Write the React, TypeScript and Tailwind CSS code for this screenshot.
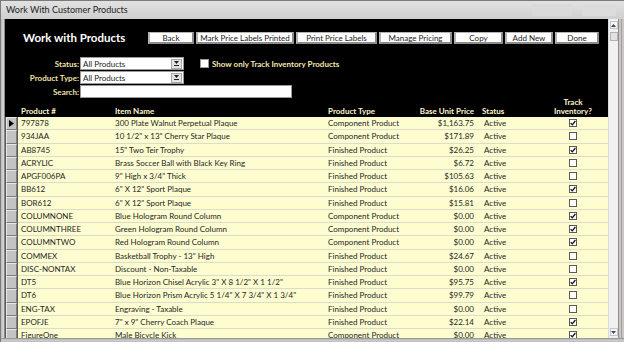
import React from "react";

type Row = {
  code: string;
  name: string;
  type: string;
  price: string;
  track: boolean;
};

const rows: Row[] = [
  { code: "797878", name: "300 Plate Walnut Perpetual Plaque", type: "Component Product", price: "$1,163.75", track: true },
  { code: "934JAA", name: '10 1/2" x 13" Cherry Star Plaque', type: "Component Product", price: "$171.89", track: false },
  { code: "AB8745", name: '15" Two Teir Trophy', type: "Finished Product", price: "$26.25", track: true },
  { code: "ACRYLIC", name: "Brass Soccer Ball with Black Key Ring", type: "Finished Product", price: "$6.72", track: false },
  { code: "APGF006PA", name: '9" High x 3/4" Thick', type: "Finished Product", price: "$105.63", track: false },
  { code: "BB612", name: '6" X 12" Sport Plaque', type: "Finished Product", price: "$16.06", track: true },
  { code: "BOR612", name: '6" X 12" Sport Plaque', type: "Finished Product", price: "$15.81", track: false },
  { code: "COLUMNONE", name: "Blue Hologram Round Column", type: "Component Product", price: "$0.00", track: true },
  { code: "COLUMNTHREE", name: "Green Hologram Round Column", type: "Component Product", price: "$0.00", track: true },
  { code: "COLUMNTWO", name: "Red Hologram Round Column", type: "Component Product", price: "$0.00", track: true },
  { code: "COMMEX", name: 'Basketball Trophy - 13" High', type: "Finished Product", price: "$24.67", track: false },
  { code: "DISC-NONTAX", name: "Discount - Non-Taxable", type: "Finished Product", price: "$0.00", track: false },
  { code: "DT5", name: 'Blue Horizon Chisel Acrylic 3" X 8 1/2" X 1 1/2"', type: "Finished Product", price: "$95.75", track: true },
  { code: "DT6", name: 'Blue Horizon Prism Acrylic 5 1/4" X 7 3/4" X 1 3/4"', type: "Finished Product", price: "$99.79", track: false },
  { code: "ENG-TAX", name: "Engraving  - Taxable", type: "Finished Product", price: "$0.00", track: false },
  { code: "EPOFJE", name: '7" x 9" Cherry Coach Plaque', type: "Finished Product", price: "$22.14", track: true },
  { code: "FigureOne", name: "Male Bicycle Kick", type: "Component Product", price: "$0.00", track: true },
];

const buttons = [
  { label: "Back", w: "w-[46px]" },
  { label: "Mark Price Labels Printed", w: "w-[98px]" },
  { label: "Print Price Labels", w: "w-[81px]" },
  { label: "Manage Pricing", w: "w-[73px]" },
  { label: "Copy", w: "w-[49px]" },
  { label: "Add New", w: "w-[48px]" },
  { label: "Done", w: "w-[44px]" },
];

function CheckBox({ checked }: { checked: boolean }) {
  return (
    <div className="w-[8px] h-[8px] bg-white border border-[#5a5a5a] flex items-center justify-center">
      {checked && (
        <svg width="6" height="6" viewBox="0 0 6 6">
          <path d="M0.6 3.1 L2.3 4.8 L5.4 1" stroke="#111" strokeWidth="1.3" fill="none" />
        </svg>
      )}
    </div>
  );
}

function Combo({ value }: { value: string }) {
  return (
    <div className="w-[104px] h-[13px] bg-white border border-[#9a9a9a] flex items-center">
      <span className="flex-1 pl-[2px] text-[8px] text-[#1a1a1a] leading-none">{value}</span>
      <div className="w-[11px] h-[10px] mr-[1px] bg-[#e4e4e4] border border-[#a8a8a8] flex flex-col items-center justify-center gap-[1px]">
        <svg width="5" height="3" viewBox="0 0 5 3">
          <path d="M0 0 L5 0 L2.5 3 Z" fill="#222" />
        </svg>
        <div className="w-[5px] h-[1px] bg-[#222]" />
      </div>
    </div>
  );
}

export default function App() {
  return (
    <div className="w-[624px] h-[342px] bg-[#cfcfcf] flex flex-col overflow-hidden font-['Lato',sans-serif] border-t border-l border-[#7a7a7a]">
      {/* Title bar */}
      <div className="h-[18px] flex items-center justify-between bg-gradient-to-b from-[#e2e2e2] to-[#cfcfcf] pl-[5px] pr-[8px]">
        <span className="text-[9px] text-[#222]">Work With Customer Products</span>
        <div className="flex items-center gap-[10px]">
          <div className="w-[40px] h-[12px] rounded-[2px] bg-[#dadada]" />
          <div className="w-[34px] h-[12px] rounded-[2px] bg-[#dcdcdc]" />
        </div>
      </div>

      <div className="flex flex-1 min-h-0">
        <div className="w-[4px] bg-gradient-to-r from-[#bdbdbd] to-[#d8d8d8] border-r border-[#8a8a8a]" />

        {/* Form */}
        <div className="w-[603px] bg-black flex flex-col min-h-0">
          {/* Header section */}
          <div className="h-[98px] flex flex-col shrink-0">
            <div className="flex items-center pt-[13px] h-[25px]">
              <div className="w-[143px] pl-[18px] text-white font-bold text-[11.5px] leading-none">
                Work with Products
              </div>
              <div className="flex gap-[2px]">
                {buttons.map((b) => (
                  <div
                    key={b.label}
                    className={`${b.w} h-[12px] bg-white border-l-2 border-t border-[#b4b4b4] border-r-2 border-b-2 border-r-[#8c8c8c] border-b-[#8c8c8c] flex items-center justify-center text-[8px] text-[#222] leading-none`}
                  >
                    {b.label}
                  </div>
                ))}
              </div>
            </div>

            <div className="flex flex-col mt-[13px] gap-[1px]">
              <div className="flex items-center h-[13px]">
                <div className="w-[75px] pr-[1px] text-right text-[8px] font-bold text-[#efe3a3] leading-none">Status:</div>
                <Combo value="All Products" />
                <div className="ml-[16px] w-[9px] h-[9px] bg-white border border-[#9a9a9a]" />
                <span className="ml-[3px] text-[8px] font-bold text-[#f3e9b0] leading-none">Show only Track Inventory Products</span>
              </div>
              <div className="flex items-center h-[13px]">
                <div className="w-[75px] pr-[1px] text-right text-[8px] font-bold text-[#efe3a3] leading-none">Product Type:</div>
                <Combo value="All Products" />
              </div>
              <div className="flex items-center h-[13px]">
                <div className="w-[75px] pr-[1px] text-right text-[8px] font-bold text-[#efe3a3] leading-none">Search:</div>
                <div className="w-[212px] h-[13px] bg-white border border-[#9a9a9a]" />
              </div>
            </div>

            {/* Column headers */}
            <div className="flex flex-1 items-end pb-[2px] text-[8px] font-bold text-[#fdf6d2] leading-[9px] whitespace-nowrap">
              <div className="w-[13px]" />
              <div className="w-[95px] pl-[3px]">Product #</div>
              <div className="w-[212px] pl-[2px]">Item Name</div>
              <div className="w-[97px] pl-[3px]">Product Type</div>
              <div className="w-[52px] flex justify-end">
                <span>Base Unit Price</span>
              </div>
              <div className="w-[66px] pl-[8px]">Status</div>
              <div className="w-[66px] text-center">
                Track
                <br />
                Inventory?
              </div>
            </div>
          </div>

          {/* Detail rows */}
          <div className="flex-1 min-h-0 overflow-hidden">
            {rows.map((r, i) => (
              <div key={r.code} className="flex h-[13.25px]">
                <div className="w-[13px] h-full pl-[1px] pr-[1px] bg-[#5c5c5c]">
                  <div className="h-full bg-[#c3c3c3] border-t border-l border-[#e8e8e8] border-r border-b border-r-[#7c7c7c] border-b-[#7c7c7c] flex items-center justify-center">
                    {i === 0 && (
                      <svg width="5" height="7" viewBox="0 0 5 7">
                        <path d="M0 0 L5 3.5 L0 7 Z" fill="#000" />
                      </svg>
                    )}
                  </div>
                </div>
                <div className="flex flex-1 items-center bg-[#fdfdd0] border-b border-[#dddccb] text-[8px] text-[#262626] leading-none whitespace-nowrap">
                  <div className="w-[95px] pl-[3px]">{r.code}</div>
                  <div className="w-[212px] pl-[2px]">{r.name}</div>
                  <div className="w-[97px] pl-[3px]">{r.type}</div>
                  <div className="w-[52px] text-right">{r.price}</div>
                  <div className="w-[66px] pl-[10px]">Active</div>
                  <div className="w-[66px] flex justify-center">
                    <CheckBox checked={r.track} />
                  </div>
                </div>
              </div>
            ))}
          </div>
        </div>

        {/* Scrollbar */}
        <div className="w-[10px] bg-[#f0f0f0] border-l border-[#dadada] flex flex-col items-center py-[2px]">
          <div className="w-[8px] h-[8px] bg-[#f4f4f4] border border-[#c4c4c4] flex items-center justify-center">
            <svg width="5" height="3" viewBox="0 0 5 3">
              <path d="M0 3 L5 3 L2.5 0 Z" fill="#3a4a66" />
            </svg>
          </div>
          <div className="w-[8px] h-[9px] mt-[3px] bg-[#e2e2e2] border border-[#b4b4b4]" />
          <div className="flex-1" />
          <div className="w-[8px] h-[8px] bg-[#f4f4f4] border border-[#c4c4c4] flex items-center justify-center">
            <svg width="5" height="3" viewBox="0 0 5 3">
              <path d="M0 0 L5 0 L2.5 3 Z" fill="#3a4a66" />
            </svg>
          </div>
        </div>

        <div className="w-[6px] bg-[#c6c6c6] border-l border-[#8e8e8e] flex">
          <div className="w-[2px]" />
          <div className="w-[1px] bg-[#ae9a9a]" />
        </div>
      </div>

      <div className="h-[4px] bg-gradient-to-b from-[#8a8a8a] via-[#cfcfcf] to-[#bdbdbd]" />
    </div>
  );
}
